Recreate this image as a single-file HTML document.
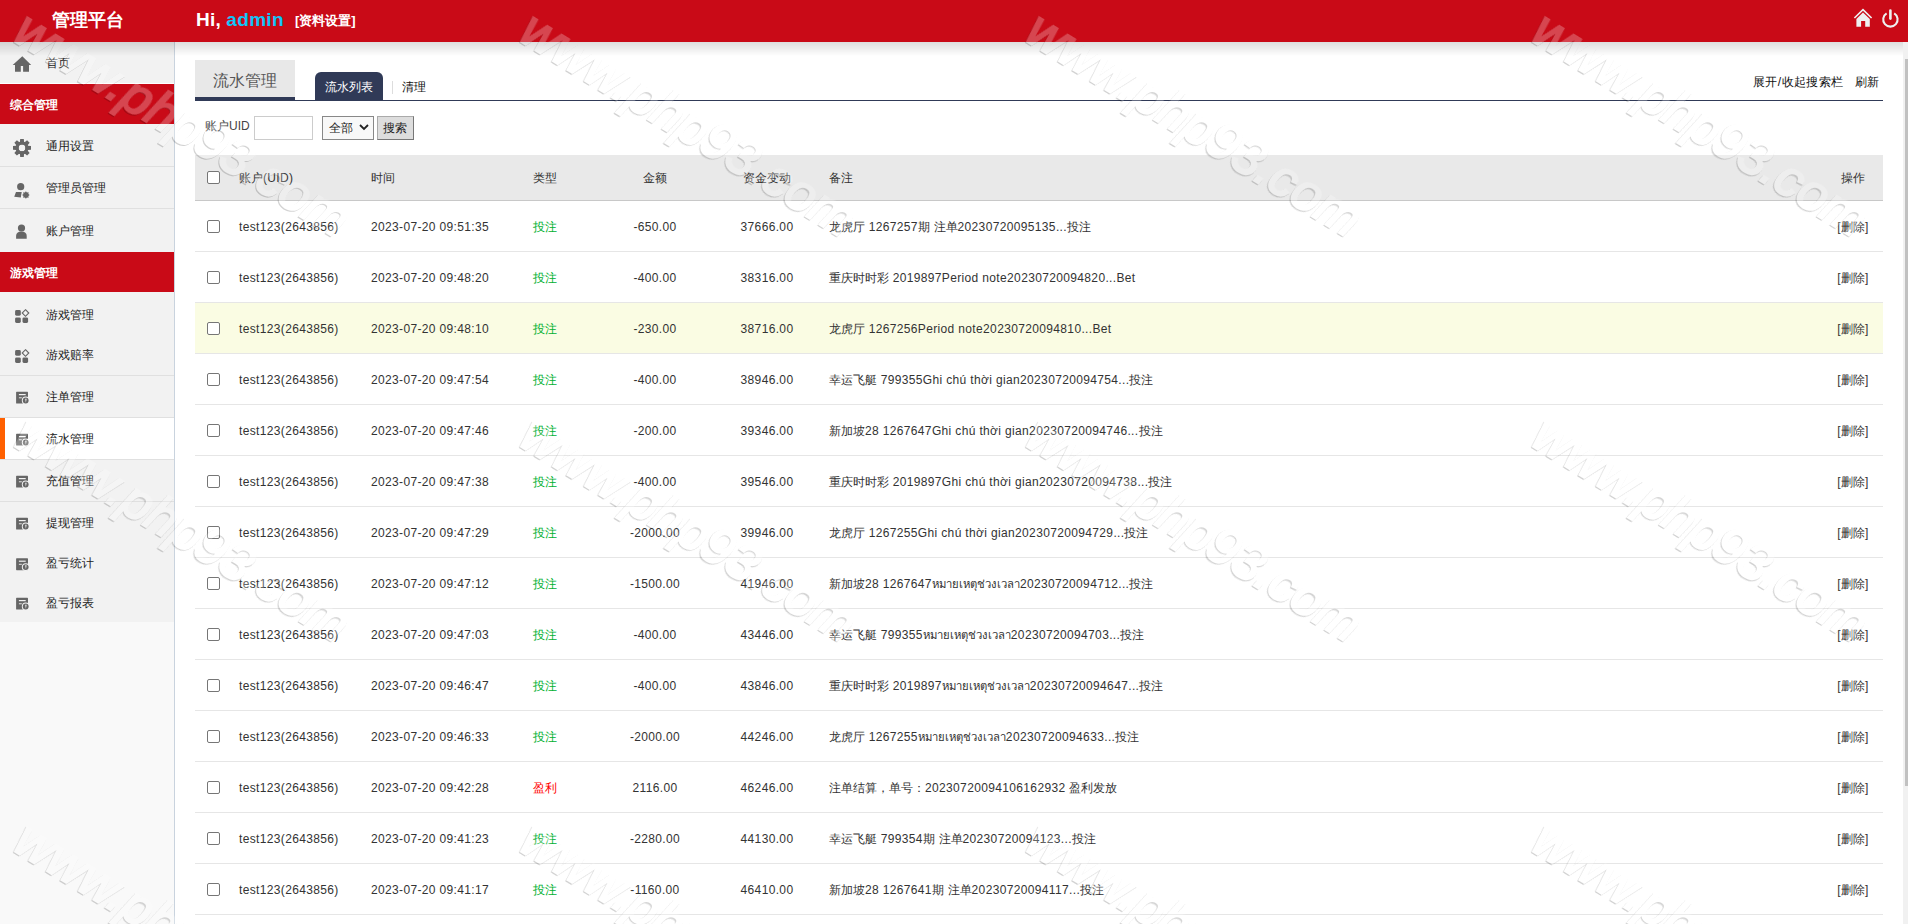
<!DOCTYPE html><html><head><meta charset="utf-8"><style>
*{box-sizing:border-box;margin:0;padding:0}
html,body{width:1908px;height:924px;overflow:hidden;background:#fff;font-family:"Liberation Sans",sans-serif;font-size:12px;color:#333}
.a{position:absolute;white-space:nowrap}
.ic{position:absolute}
#hdr{position:absolute;left:0;top:0;width:1908px;height:42px;background:#c90a17}
#shadow{position:absolute;left:0;top:42px;width:1903px;height:14px;background:linear-gradient(rgba(0,0,0,0.13),rgba(0,0,0,0));z-index:5}
#side{position:absolute;left:0;top:42px;width:175px;height:882px;background:#f9f9f9;border-right:1px solid #c9d3de}
.it{position:absolute;left:0;width:174px;background:#f2f2f2}
.it span{position:absolute;left:46px;top:50%;transform:translateY(-50%);font-size:12px;color:#222}
.rh{position:absolute;left:0;width:174px;height:40px;background:#c90a17;color:#fff;font-weight:bold}
.rh span{position:absolute;left:10px;top:13px;font-size:12px}
.bd{position:absolute;left:0;width:174px;height:1px;background:#e0e0e0}
.cb{position:absolute;width:13px;height:13px;border:1px solid #767676;border-radius:2px;background:#fff}
.tr{position:absolute;left:195px;width:1688px;height:51px;border-bottom:1px solid #e6e6e6}
.wm{position:absolute;white-space:nowrap;font-size:52px;font-style:italic;color:rgba(255,255,255,0.25);text-shadow:-1px 1px 1px rgba(0,0,0,0.18);transform-origin:0 0;transform:rotate(31.5deg);line-height:1}
.c{position:absolute;top:18px;white-space:nowrap;font-size:12px;color:#333;line-height:14px}
</style></head><body>

<div id="hdr">
<div class="a" style="left:52px;top:9px;font-size:18px;font-weight:bold;color:#fff;line-height:22px">管理平台</div>
<div class="a" style="left:196px;top:9px;font-size:19px;font-weight:bold;color:#fff;line-height:22px;letter-spacing:0.2px">Hi, <span style="color:#10c4f8;letter-spacing:0.3px">admin</span></div>
<div class="a" style="left:295px;top:13px;font-size:13px;font-weight:bold;color:#fff;line-height:16px">[资料设置]</div>
<svg class="ic" style="left:1840px;top:0" width="68" height="42" viewBox="1840 0 68 42"><path d="M1854.4 18 L1863 9.6 L1871.6 18" fill="none" stroke="#eef0f0" stroke-width="1.6"/><path d="M1863 12.6 L1869.8 19 L1869.8 26.8 L1865.2 26.8 L1865.2 20.9 L1861.1 20.9 L1861.1 26.8 L1856.4 26.8 L1856.4 19 Z" fill="#eef0f0"/><path d="M1886.6 13.3 A7.2 7.2 0 1 0 1894.2 13.3" fill="none" stroke="#eef0f0" stroke-width="2.1"/><line x1="1890.4" y1="10.6" x2="1890.4" y2="18.6" stroke="#eef0f0" stroke-width="2.6" stroke-linecap="round"/></svg>
</div>
<div id="shadow"></div>
<div id="side"></div>
<div class="it" style="top:42px;height:41px;background:#f2f2f2"><span style="top:20.5px">首页</span></div>
<div class="it" style="top:124px;height:43px;background:#f2f2f2"><span style="top:21.5px">通用设置</span></div>
<div class="it" style="top:167px;height:42px;background:#f2f2f2"><span style="top:21.0px">管理员管理</span></div>
<div class="it" style="top:209px;height:43px;background:#f2f2f2"><span style="top:21.5px">账户管理</span></div>
<div class="it" style="top:292px;height:42px;background:#f2f2f2"><span style="top:22.5px">游戏管理</span></div>
<div class="it" style="top:334px;height:41px;background:#f2f2f2"><span style="top:20.5px">游戏赔率</span></div>
<div class="it" style="top:376px;height:41px;background:#f2f2f2"><span style="top:20.5px">注单管理</span></div>
<div class="it" style="top:418px;height:41px;background:#fff"><span style="top:20.5px">流水管理</span></div><div class="a" style="left:0;top:418px;width:5px;height:41px;background:#ff6000"></div>
<div class="it" style="top:460px;height:41px;background:#f2f2f2"><span style="top:20.5px">充值管理</span></div>
<div class="it" style="top:502px;height:41px;background:#f2f2f2"><span style="top:20.5px">提现管理</span></div>
<div class="it" style="top:543px;height:40px;background:#f2f2f2"><span style="top:20.0px">盈亏统计</span></div>
<div class="it" style="top:583px;height:39px;background:#f2f2f2"><span style="top:19.5px">盈亏报表</span></div>
<svg class="ic" style="left:0;top:0;z-index:3" width="40" height="640" viewBox="0 0 40 640"><path d="M22.3 56.2 L31.2 64.9 L29 64.9 L29 71.8 L23.1 71.8 L23.1 65.9 L20.8 65.9 L20.8 71.8 L15 71.8 L15 64.9 L12.7 64.9 Z" fill="#666"/><path fill-rule="evenodd" d="M27.80,145.80 L31.00,146.10 L31.00,149.70 L27.80,150.00 L27.59,150.52 L29.64,152.99 L27.09,155.54 L24.62,153.49 L24.10,153.70 L23.80,156.90 L20.20,156.90 L19.90,153.70 L19.38,153.49 L16.91,155.54 L14.36,152.99 L16.41,150.52 L16.20,150.00 L13.00,149.70 L13.00,146.10 L16.20,145.80 L16.41,145.28 L14.36,142.81 L16.91,140.26 L19.38,142.31 L19.90,142.10 L20.20,138.90 L23.80,138.90 L24.10,142.10 L24.62,142.31 L27.09,140.26 L29.64,142.81 L27.59,145.28 Z M22 144.5 A3.4 3.4 0 1 0 22 151.3 A3.4 3.4 0 1 0 22 144.5 Z" fill="#666"/><circle cx="22" cy="147.9" r="4.9" fill="none" stroke="#666" stroke-width="3"/><circle cx="20.7" cy="186.7" r="3.6" fill="#666"/><path d="M16 192 L21.7 192 L20.8 197.6 L14.2 196.8 Z" fill="#666"/><path d="M29.70,195.00 L28.39,196.03 L28.59,197.69 L26.93,197.49 L25.90,198.80 L24.87,197.49 L23.21,197.69 L23.41,196.03 L22.10,195.00 L23.41,193.97 L23.21,192.31 L24.87,192.51 L25.90,191.20 L26.93,192.51 L28.59,192.31 L28.39,193.97 Z" fill="#666"/><circle cx="21.5" cy="228" r="3.6" fill="#666"/><path d="M16.1 238.8 L16.1 236 Q16.1 231.4 21.4 231.4 Q26.7 231.4 26.7 236 L26.7 238.8 Z" fill="#666"/><rect x="15.1" y="310" width="5.7" height="5.7" rx="1.4" fill="#666"/><rect x="15.1" y="317.4" width="5.7" height="5.6" rx="1.4" fill="#666"/><rect x="22.5" y="317.4" width="5.6" height="5.6" rx="1.4" fill="#666"/><path d="M25.5 309.7 L28.8 313 L25.5 316.3 L22.2 313 Z" fill="none" stroke="#666" stroke-width="1.1"/><rect x="15.1" y="350" width="5.7" height="5.7" rx="1.4" fill="#666"/><rect x="15.1" y="357.4" width="5.7" height="5.6" rx="1.4" fill="#666"/><rect x="22.5" y="357.4" width="5.6" height="5.6" rx="1.4" fill="#666"/><path d="M25.5 349.7 L28.8 353 L25.5 356.3 L22.2 353 Z" fill="none" stroke="#666" stroke-width="1.1"/><rect x="16.1" y="391.7" width="11.9" height="11.9" rx="0.6" fill="#666"/><rect x="18.9" y="394.0" width="6.8" height="1.2" fill="#f2f2f2"/><rect x="18.9" y="397.2" width="2.9" height="1.1" fill="#f2f2f2" opacity="0.8"/><circle cx="25.7" cy="400.5" r="3.9" fill="#f2f2f2"/><circle cx="25.7" cy="400.5" r="2.9" fill="#666"/><path d="M25.2 398.7 L26.6 398.7 L25.9 402.7 Z" fill="#f2f2f2"/><rect x="16.1" y="433.7" width="11.9" height="11.9" rx="0.6" fill="#666"/><rect x="18.9" y="436.0" width="6.8" height="1.2" fill="#fff"/><rect x="18.9" y="439.2" width="2.9" height="1.1" fill="#fff" opacity="0.8"/><circle cx="25.7" cy="442.5" r="3.9" fill="#fff"/><circle cx="25.7" cy="442.5" r="2.9" fill="#666"/><path d="M25.2 440.7 L26.6 440.7 L25.9 444.7 Z" fill="#fff"/><rect x="16.1" y="475.7" width="11.9" height="11.9" rx="0.6" fill="#666"/><rect x="18.9" y="478.0" width="6.8" height="1.2" fill="#f2f2f2"/><rect x="18.9" y="481.2" width="2.9" height="1.1" fill="#f2f2f2" opacity="0.8"/><circle cx="25.7" cy="484.5" r="3.9" fill="#f2f2f2"/><circle cx="25.7" cy="484.5" r="2.9" fill="#666"/><path d="M25.2 482.7 L26.6 482.7 L25.9 486.7 Z" fill="#f2f2f2"/><rect x="16.1" y="517.7" width="11.9" height="11.9" rx="0.6" fill="#666"/><rect x="18.9" y="520.0" width="6.8" height="1.2" fill="#f2f2f2"/><rect x="18.9" y="523.2" width="2.9" height="1.1" fill="#f2f2f2" opacity="0.8"/><circle cx="25.7" cy="526.5" r="3.9" fill="#f2f2f2"/><circle cx="25.7" cy="526.5" r="2.9" fill="#666"/><path d="M25.2 524.7 L26.6 524.7 L25.9 528.7 Z" fill="#f2f2f2"/><rect x="16.1" y="558.3000000000001" width="11.9" height="11.9" rx="0.6" fill="#666"/><rect x="18.9" y="560.6" width="6.8" height="1.2" fill="#f2f2f2"/><rect x="18.9" y="563.8000000000001" width="2.9" height="1.1" fill="#f2f2f2" opacity="0.8"/><circle cx="25.7" cy="567.1" r="3.9" fill="#f2f2f2"/><circle cx="25.7" cy="567.1" r="2.9" fill="#666"/><path d="M25.2 565.3000000000001 L26.6 565.3000000000001 L25.9 569.3000000000001 Z" fill="#f2f2f2"/><rect x="16.1" y="597.7" width="11.9" height="11.9" rx="0.6" fill="#666"/><rect x="18.9" y="600.0" width="6.8" height="1.2" fill="#f2f2f2"/><rect x="18.9" y="603.2" width="2.9" height="1.1" fill="#f2f2f2" opacity="0.8"/><circle cx="25.7" cy="606.5" r="3.9" fill="#f2f2f2"/><circle cx="25.7" cy="606.5" r="2.9" fill="#666"/><path d="M25.2 604.7 L26.6 604.7 L25.9 608.7 Z" fill="#f2f2f2"/></svg>
<div class="bd" style="top:83px;background:#fff"></div>
<div class="rh" style="top:84px"><span>综合管理</span></div>
<div class="rh" style="top:252px"><span>游戏管理</span></div>
<div class="bd" style="top:166px"></div>
<div class="bd" style="top:208px"></div>
<div class="bd" style="top:375px"></div>
<div class="bd" style="top:417px"></div>
<div class="bd" style="top:459px"></div>
<div class="bd" style="top:501px"></div>
<div class="a" style="left:195px;top:60px;width:100px;height:37px;background:#e8e8e8"></div>
<div class="a" style="left:213px;top:71px;font-size:16px;color:#555;line-height:20px">流水管理</div>
<div class="a" style="left:195px;top:97px;width:100px;height:4px;background:#303a57"></div>
<div class="a" style="left:195px;top:100px;width:1688px;height:1px;background:#303a57"></div>
<div class="a" style="left:315px;top:72px;width:68px;height:28px;background:#303a57;border-radius:6px 6px 0 0"></div>
<div class="a" style="left:325px;top:79px;font-size:12px;color:#fff;line-height:16px">流水列表</div>
<div class="a" style="left:392px;top:81px;width:1px;height:13px;background:#ddd"></div>
<div class="a" style="left:402px;top:79px;font-size:12px;color:#111;line-height:16px">清理</div>
<div class="a" style="left:1753px;top:75px;font-size:12px;color:#111;line-height:14px;letter-spacing:0.4px">展开/收起搜索栏</div>
<div class="a" style="left:1855px;top:75px;font-size:12px;color:#111;line-height:14px">刷新</div>
<div class="a" style="left:205px;top:119px;font-size:12px;color:#444;line-height:14px">账户UID</div>
<div class="a" style="left:254px;top:116px;width:59px;height:24px;border:1px solid #ccc;background:#fff"></div>
<div class="a" style="left:322px;top:116px;width:52px;height:24px;border:1px solid #888;background:#f8f8f8"></div>
<div class="a" style="left:329px;top:121px;font-size:12px;color:#222;line-height:14px">全部</div>
<svg class="ic" style="left:359px;top:124px" width="10" height="7" viewBox="0 0 10 7"><path d="M1 1 L5 5 L9 1" fill="none" stroke="#222" stroke-width="1.8"/></svg>
<div class="a" style="left:377px;top:116px;width:37px;height:24px;background:#ddd;border:1px solid #aaa;border-right-color:#777;border-bottom-color:#777"></div>
<div class="a" style="left:383px;top:121px;font-size:12px;color:#222;line-height:14px">搜索</div>
<div class="a" style="left:195px;top:155px;width:1688px;height:46px;background:#e9e9e9;border-bottom:1px solid #c8c8c8"></div>
<div class="cb" style="left:207px;top:171px"></div>
<div class="c" style="left:239px;top:171px;color:#333">账户<span style="letter-spacing:0.35px">(UID)</span></div>
<div class="c" style="left:371px;top:171px;color:#333">时间</div>
<div class="c" style="left:533px;top:171px;color:#333">类型</div>
<div class="c" style="left:555px;width:200px;text-align:center;top:171px;color:#333">金额</div>
<div class="c" style="left:667px;width:200px;text-align:center;top:171px;color:#333">资金变动</div>
<div class="c" style="left:829px;top:171px;color:#333">备注</div>
<div class="c" style="left:1753px;width:200px;text-align:center;top:171px;color:#333">操作</div>
<div class="tr" style="top:201px;background:#fff"></div>
<div class="cb" style="left:207px;top:220px"></div>
<div class="c" style="left:239px;top:220px;color:#333"><span style="letter-spacing:0.35px">test123(2643856)</span></div>
<div class="c" style="left:371px;top:220px;color:#333"><span style="letter-spacing:0.35px">2023-07-20 09:51:35</span></div>
<div class="c" style="left:533px;top:220px;color:#00b030">投注</div>
<div class="c" style="left:555px;width:200px;text-align:center;top:220px;color:#333"><span style="letter-spacing:0.35px">-650.00</span></div>
<div class="c" style="left:667px;width:200px;text-align:center;top:220px;color:#333"><span style="letter-spacing:0.35px">37666.00</span></div>
<div class="c" style="left:829px;top:220px;color:#333">龙虎厅<span style="letter-spacing:0.35px"> 1267257</span>期<span style="letter-spacing:0.35px"> </span>注单<span style="letter-spacing:0.35px">20230720095135...</span>投注</div>
<div class="c" style="left:1753px;width:200px;text-align:center;top:220px;color:#333"><span style="letter-spacing:0.35px">[</span>删除<span style="letter-spacing:0.35px">]</span></div>
<div class="tr" style="top:252px;background:#fff"></div>
<div class="cb" style="left:207px;top:271px"></div>
<div class="c" style="left:239px;top:271px;color:#333"><span style="letter-spacing:0.35px">test123(2643856)</span></div>
<div class="c" style="left:371px;top:271px;color:#333"><span style="letter-spacing:0.35px">2023-07-20 09:48:20</span></div>
<div class="c" style="left:533px;top:271px;color:#00b030">投注</div>
<div class="c" style="left:555px;width:200px;text-align:center;top:271px;color:#333"><span style="letter-spacing:0.35px">-400.00</span></div>
<div class="c" style="left:667px;width:200px;text-align:center;top:271px;color:#333"><span style="letter-spacing:0.35px">38316.00</span></div>
<div class="c" style="left:829px;top:271px;color:#333">重庆时时彩<span style="letter-spacing:0.35px"> 2019897Period note20230720094820...Bet</span></div>
<div class="c" style="left:1753px;width:200px;text-align:center;top:271px;color:#333"><span style="letter-spacing:0.35px">[</span>删除<span style="letter-spacing:0.35px">]</span></div>
<div class="tr" style="top:303px;background:#fafce3"></div>
<div class="cb" style="left:207px;top:322px"></div>
<div class="c" style="left:239px;top:322px;color:#333"><span style="letter-spacing:0.35px">test123(2643856)</span></div>
<div class="c" style="left:371px;top:322px;color:#333"><span style="letter-spacing:0.35px">2023-07-20 09:48:10</span></div>
<div class="c" style="left:533px;top:322px;color:#00b030">投注</div>
<div class="c" style="left:555px;width:200px;text-align:center;top:322px;color:#333"><span style="letter-spacing:0.35px">-230.00</span></div>
<div class="c" style="left:667px;width:200px;text-align:center;top:322px;color:#333"><span style="letter-spacing:0.35px">38716.00</span></div>
<div class="c" style="left:829px;top:322px;color:#333">龙虎厅<span style="letter-spacing:0.35px"> 1267256Period note20230720094810...Bet</span></div>
<div class="c" style="left:1753px;width:200px;text-align:center;top:322px;color:#333"><span style="letter-spacing:0.35px">[</span>删除<span style="letter-spacing:0.35px">]</span></div>
<div class="tr" style="top:354px;background:#fff"></div>
<div class="cb" style="left:207px;top:373px"></div>
<div class="c" style="left:239px;top:373px;color:#333"><span style="letter-spacing:0.35px">test123(2643856)</span></div>
<div class="c" style="left:371px;top:373px;color:#333"><span style="letter-spacing:0.35px">2023-07-20 09:47:54</span></div>
<div class="c" style="left:533px;top:373px;color:#00b030">投注</div>
<div class="c" style="left:555px;width:200px;text-align:center;top:373px;color:#333"><span style="letter-spacing:0.35px">-400.00</span></div>
<div class="c" style="left:667px;width:200px;text-align:center;top:373px;color:#333"><span style="letter-spacing:0.35px">38946.00</span></div>
<div class="c" style="left:829px;top:373px;color:#333">幸运飞艇<span style="letter-spacing:0.35px"> 799355Ghi chú thời gian20230720094754...</span>投注</div>
<div class="c" style="left:1753px;width:200px;text-align:center;top:373px;color:#333"><span style="letter-spacing:0.35px">[</span>删除<span style="letter-spacing:0.35px">]</span></div>
<div class="tr" style="top:405px;background:#fff"></div>
<div class="cb" style="left:207px;top:424px"></div>
<div class="c" style="left:239px;top:424px;color:#333"><span style="letter-spacing:0.35px">test123(2643856)</span></div>
<div class="c" style="left:371px;top:424px;color:#333"><span style="letter-spacing:0.35px">2023-07-20 09:47:46</span></div>
<div class="c" style="left:533px;top:424px;color:#00b030">投注</div>
<div class="c" style="left:555px;width:200px;text-align:center;top:424px;color:#333"><span style="letter-spacing:0.35px">-200.00</span></div>
<div class="c" style="left:667px;width:200px;text-align:center;top:424px;color:#333"><span style="letter-spacing:0.35px">39346.00</span></div>
<div class="c" style="left:829px;top:424px;color:#333">新加坡<span style="letter-spacing:0.35px">28 1267647Ghi chú thời gian20230720094746...</span>投注</div>
<div class="c" style="left:1753px;width:200px;text-align:center;top:424px;color:#333"><span style="letter-spacing:0.35px">[</span>删除<span style="letter-spacing:0.35px">]</span></div>
<div class="tr" style="top:456px;background:#fff"></div>
<div class="cb" style="left:207px;top:475px"></div>
<div class="c" style="left:239px;top:475px;color:#333"><span style="letter-spacing:0.35px">test123(2643856)</span></div>
<div class="c" style="left:371px;top:475px;color:#333"><span style="letter-spacing:0.35px">2023-07-20 09:47:38</span></div>
<div class="c" style="left:533px;top:475px;color:#00b030">投注</div>
<div class="c" style="left:555px;width:200px;text-align:center;top:475px;color:#333"><span style="letter-spacing:0.35px">-400.00</span></div>
<div class="c" style="left:667px;width:200px;text-align:center;top:475px;color:#333"><span style="letter-spacing:0.35px">39546.00</span></div>
<div class="c" style="left:829px;top:475px;color:#333">重庆时时彩<span style="letter-spacing:0.35px"> 2019897Ghi chú thời gian20230720094738...</span>投注</div>
<div class="c" style="left:1753px;width:200px;text-align:center;top:475px;color:#333"><span style="letter-spacing:0.35px">[</span>删除<span style="letter-spacing:0.35px">]</span></div>
<div class="tr" style="top:507px;background:#fff"></div>
<div class="cb" style="left:207px;top:526px"></div>
<div class="c" style="left:239px;top:526px;color:#333"><span style="letter-spacing:0.35px">test123(2643856)</span></div>
<div class="c" style="left:371px;top:526px;color:#333"><span style="letter-spacing:0.35px">2023-07-20 09:47:29</span></div>
<div class="c" style="left:533px;top:526px;color:#00b030">投注</div>
<div class="c" style="left:555px;width:200px;text-align:center;top:526px;color:#333"><span style="letter-spacing:0.35px">-2000.00</span></div>
<div class="c" style="left:667px;width:200px;text-align:center;top:526px;color:#333"><span style="letter-spacing:0.35px">39946.00</span></div>
<div class="c" style="left:829px;top:526px;color:#333">龙虎厅<span style="letter-spacing:0.35px"> 1267255Ghi chú thời gian20230720094729...</span>投注</div>
<div class="c" style="left:1753px;width:200px;text-align:center;top:526px;color:#333"><span style="letter-spacing:0.35px">[</span>删除<span style="letter-spacing:0.35px">]</span></div>
<div class="tr" style="top:558px;background:#fff"></div>
<div class="cb" style="left:207px;top:577px"></div>
<div class="c" style="left:239px;top:577px;color:#333"><span style="letter-spacing:0.35px">test123(2643856)</span></div>
<div class="c" style="left:371px;top:577px;color:#333"><span style="letter-spacing:0.35px">2023-07-20 09:47:12</span></div>
<div class="c" style="left:533px;top:577px;color:#00b030">投注</div>
<div class="c" style="left:555px;width:200px;text-align:center;top:577px;color:#333"><span style="letter-spacing:0.35px">-1500.00</span></div>
<div class="c" style="left:667px;width:200px;text-align:center;top:577px;color:#333"><span style="letter-spacing:0.35px">41946.00</span></div>
<div class="c" style="left:829px;top:577px;color:#333">新加坡<span style="letter-spacing:0.35px">28 1267647</span><span style="font-size:11.3px">หมายเหตุช่วงเวลา</span><span style="letter-spacing:0.35px">20230720094712...</span>投注</div>
<div class="c" style="left:1753px;width:200px;text-align:center;top:577px;color:#333"><span style="letter-spacing:0.35px">[</span>删除<span style="letter-spacing:0.35px">]</span></div>
<div class="tr" style="top:609px;background:#fff"></div>
<div class="cb" style="left:207px;top:628px"></div>
<div class="c" style="left:239px;top:628px;color:#333"><span style="letter-spacing:0.35px">test123(2643856)</span></div>
<div class="c" style="left:371px;top:628px;color:#333"><span style="letter-spacing:0.35px">2023-07-20 09:47:03</span></div>
<div class="c" style="left:533px;top:628px;color:#00b030">投注</div>
<div class="c" style="left:555px;width:200px;text-align:center;top:628px;color:#333"><span style="letter-spacing:0.35px">-400.00</span></div>
<div class="c" style="left:667px;width:200px;text-align:center;top:628px;color:#333"><span style="letter-spacing:0.35px">43446.00</span></div>
<div class="c" style="left:829px;top:628px;color:#333">幸运飞艇<span style="letter-spacing:0.35px"> 799355</span><span style="font-size:11.3px">หมายเหตุช่วงเวลา</span><span style="letter-spacing:0.35px">20230720094703...</span>投注</div>
<div class="c" style="left:1753px;width:200px;text-align:center;top:628px;color:#333"><span style="letter-spacing:0.35px">[</span>删除<span style="letter-spacing:0.35px">]</span></div>
<div class="tr" style="top:660px;background:#fff"></div>
<div class="cb" style="left:207px;top:679px"></div>
<div class="c" style="left:239px;top:679px;color:#333"><span style="letter-spacing:0.35px">test123(2643856)</span></div>
<div class="c" style="left:371px;top:679px;color:#333"><span style="letter-spacing:0.35px">2023-07-20 09:46:47</span></div>
<div class="c" style="left:533px;top:679px;color:#00b030">投注</div>
<div class="c" style="left:555px;width:200px;text-align:center;top:679px;color:#333"><span style="letter-spacing:0.35px">-400.00</span></div>
<div class="c" style="left:667px;width:200px;text-align:center;top:679px;color:#333"><span style="letter-spacing:0.35px">43846.00</span></div>
<div class="c" style="left:829px;top:679px;color:#333">重庆时时彩<span style="letter-spacing:0.35px"> 2019897</span><span style="font-size:11.3px">หมายเหตุช่วงเวลา</span><span style="letter-spacing:0.35px">20230720094647...</span>投注</div>
<div class="c" style="left:1753px;width:200px;text-align:center;top:679px;color:#333"><span style="letter-spacing:0.35px">[</span>删除<span style="letter-spacing:0.35px">]</span></div>
<div class="tr" style="top:711px;background:#fff"></div>
<div class="cb" style="left:207px;top:730px"></div>
<div class="c" style="left:239px;top:730px;color:#333"><span style="letter-spacing:0.35px">test123(2643856)</span></div>
<div class="c" style="left:371px;top:730px;color:#333"><span style="letter-spacing:0.35px">2023-07-20 09:46:33</span></div>
<div class="c" style="left:533px;top:730px;color:#00b030">投注</div>
<div class="c" style="left:555px;width:200px;text-align:center;top:730px;color:#333"><span style="letter-spacing:0.35px">-2000.00</span></div>
<div class="c" style="left:667px;width:200px;text-align:center;top:730px;color:#333"><span style="letter-spacing:0.35px">44246.00</span></div>
<div class="c" style="left:829px;top:730px;color:#333">龙虎厅<span style="letter-spacing:0.35px"> 1267255</span><span style="font-size:11.3px">หมายเหตุช่วงเวลา</span><span style="letter-spacing:0.35px">20230720094633...</span>投注</div>
<div class="c" style="left:1753px;width:200px;text-align:center;top:730px;color:#333"><span style="letter-spacing:0.35px">[</span>删除<span style="letter-spacing:0.35px">]</span></div>
<div class="tr" style="top:762px;background:#fff"></div>
<div class="cb" style="left:207px;top:781px"></div>
<div class="c" style="left:239px;top:781px;color:#333"><span style="letter-spacing:0.35px">test123(2643856)</span></div>
<div class="c" style="left:371px;top:781px;color:#333"><span style="letter-spacing:0.35px">2023-07-20 09:42:28</span></div>
<div class="c" style="left:533px;top:781px;color:#ff0000">盈利</div>
<div class="c" style="left:555px;width:200px;text-align:center;top:781px;color:#333"><span style="letter-spacing:0.35px">2116.00</span></div>
<div class="c" style="left:667px;width:200px;text-align:center;top:781px;color:#333"><span style="letter-spacing:0.35px">46246.00</span></div>
<div class="c" style="left:829px;top:781px;color:#333">注单结算，单号：<span style="letter-spacing:0.35px">20230720094106162932 </span>盈利发放</div>
<div class="c" style="left:1753px;width:200px;text-align:center;top:781px;color:#333"><span style="letter-spacing:0.35px">[</span>删除<span style="letter-spacing:0.35px">]</span></div>
<div class="tr" style="top:813px;background:#fff"></div>
<div class="cb" style="left:207px;top:832px"></div>
<div class="c" style="left:239px;top:832px;color:#333"><span style="letter-spacing:0.35px">test123(2643856)</span></div>
<div class="c" style="left:371px;top:832px;color:#333"><span style="letter-spacing:0.35px">2023-07-20 09:41:23</span></div>
<div class="c" style="left:533px;top:832px;color:#00b030">投注</div>
<div class="c" style="left:555px;width:200px;text-align:center;top:832px;color:#333"><span style="letter-spacing:0.35px">-2280.00</span></div>
<div class="c" style="left:667px;width:200px;text-align:center;top:832px;color:#333"><span style="letter-spacing:0.35px">44130.00</span></div>
<div class="c" style="left:829px;top:832px;color:#333">幸运飞艇<span style="letter-spacing:0.35px"> 799354</span>期<span style="letter-spacing:0.35px"> </span>注单<span style="letter-spacing:0.35px">20230720094123...</span>投注</div>
<div class="c" style="left:1753px;width:200px;text-align:center;top:832px;color:#333"><span style="letter-spacing:0.35px">[</span>删除<span style="letter-spacing:0.35px">]</span></div>
<div class="tr" style="top:864px;background:#fff"></div>
<div class="cb" style="left:207px;top:883px"></div>
<div class="c" style="left:239px;top:883px;color:#333"><span style="letter-spacing:0.35px">test123(2643856)</span></div>
<div class="c" style="left:371px;top:883px;color:#333"><span style="letter-spacing:0.35px">2023-07-20 09:41:17</span></div>
<div class="c" style="left:533px;top:883px;color:#00b030">投注</div>
<div class="c" style="left:555px;width:200px;text-align:center;top:883px;color:#333"><span style="letter-spacing:0.35px">-1160.00</span></div>
<div class="c" style="left:667px;width:200px;text-align:center;top:883px;color:#333"><span style="letter-spacing:0.35px">46410.00</span></div>
<div class="c" style="left:829px;top:883px;color:#333">新加坡<span style="letter-spacing:0.35px">28 1267641</span>期<span style="letter-spacing:0.35px"> </span>注单<span style="letter-spacing:0.35px">20230720094117...</span>投注</div>
<div class="c" style="left:1753px;width:200px;text-align:center;top:883px;color:#333"><span style="letter-spacing:0.35px">[</span>删除<span style="letter-spacing:0.35px">]</span></div>
<div class="tr" style="top:915px;background:#fff"></div>
<div class="cb" style="left:207px;top:934px"></div>
<div class="c" style="left:239px;top:934px;color:#333"><span style="letter-spacing:0.35px">test123(2643856)</span></div>
<div class="c" style="left:371px;top:934px;color:#333"><span style="letter-spacing:0.35px">2023-07-20 09:41:05</span></div>
<div class="c" style="left:533px;top:934px;color:#00b030">投注</div>
<div class="c" style="left:555px;width:200px;text-align:center;top:934px;color:#333"><span style="letter-spacing:0.35px">-400.00</span></div>
<div class="c" style="left:667px;width:200px;text-align:center;top:934px;color:#333"><span style="letter-spacing:0.35px">46810.00</span></div>
<div class="c" style="left:829px;top:934px;color:#333"></div>
<div class="c" style="left:1753px;width:200px;text-align:center;top:934px;color:#333"><span style="letter-spacing:0.35px">[</span>删除<span style="letter-spacing:0.35px">]</span></div>
<div class="a" style="left:1903px;top:42px;width:5px;height:882px;background:#f1f1f1;z-index:6"></div>
<div class="a" style="left:1905px;top:59px;width:3px;height:727px;background:#c1c1c1;z-index:6"></div>
<svg style="position:absolute;left:0;top:0;z-index:4;pointer-events:none" width="1908" height="924" viewBox="0 0 1908 924"><defs><text id="wt" x="0" y="0" font-family="Liberation Sans" font-style="italic" font-size="52">www.php93.com</text><mask id="wm" maskUnits="userSpaceOnUse" x="0" y="0" width="1908" height="924"><rect x="0" y="0" width="1908" height="924" fill="white"/><use href="#wt" fill="black" stroke="black" stroke-width="2.2" transform="translate(11,39) rotate(31.5)"/><use href="#wt" fill="black" stroke="black" stroke-width="2.2" transform="translate(517,39) rotate(31.5)"/><use href="#wt" fill="black" stroke="black" stroke-width="2.2" transform="translate(1023,39) rotate(31.5)"/><use href="#wt" fill="black" stroke="black" stroke-width="2.2" transform="translate(1529,39) rotate(31.5)"/><use href="#wt" fill="black" stroke="black" stroke-width="2.2" transform="translate(11,444) rotate(31.5)"/><use href="#wt" fill="black" stroke="black" stroke-width="2.2" transform="translate(517,444) rotate(31.5)"/><use href="#wt" fill="black" stroke="black" stroke-width="2.2" transform="translate(1023,444) rotate(31.5)"/><use href="#wt" fill="black" stroke="black" stroke-width="2.2" transform="translate(1529,444) rotate(31.5)"/><use href="#wt" fill="black" stroke="black" stroke-width="2.2" transform="translate(11,849) rotate(31.5)"/><use href="#wt" fill="black" stroke="black" stroke-width="2.2" transform="translate(517,849) rotate(31.5)"/><use href="#wt" fill="black" stroke="black" stroke-width="2.2" transform="translate(1023,849) rotate(31.5)"/><use href="#wt" fill="black" stroke="black" stroke-width="2.2" transform="translate(1529,849) rotate(31.5)"/></mask><filter id="wb" x="-10%" y="-10%" width="120%" height="120%"><feGaussianBlur stdDeviation="0.5"/></filter></defs><g mask="url(#wm)"><g filter="url(#wb)" opacity="0.18"><use href="#wt" fill="black" stroke="black" stroke-width="2.2" transform="translate(10,40) rotate(31.5)"/><use href="#wt" fill="black" stroke="black" stroke-width="2.2" transform="translate(516,40) rotate(31.5)"/><use href="#wt" fill="black" stroke="black" stroke-width="2.2" transform="translate(1022,40) rotate(31.5)"/><use href="#wt" fill="black" stroke="black" stroke-width="2.2" transform="translate(1528,40) rotate(31.5)"/><use href="#wt" fill="black" stroke="black" stroke-width="2.2" transform="translate(10,445) rotate(31.5)"/><use href="#wt" fill="black" stroke="black" stroke-width="2.2" transform="translate(516,445) rotate(31.5)"/><use href="#wt" fill="black" stroke="black" stroke-width="2.2" transform="translate(1022,445) rotate(31.5)"/><use href="#wt" fill="black" stroke="black" stroke-width="2.2" transform="translate(1528,445) rotate(31.5)"/><use href="#wt" fill="black" stroke="black" stroke-width="2.2" transform="translate(10,850) rotate(31.5)"/><use href="#wt" fill="black" stroke="black" stroke-width="2.2" transform="translate(516,850) rotate(31.5)"/><use href="#wt" fill="black" stroke="black" stroke-width="2.2" transform="translate(1022,850) rotate(31.5)"/><use href="#wt" fill="black" stroke="black" stroke-width="2.2" transform="translate(1528,850) rotate(31.5)"/></g></g><g opacity="0.25"><use href="#wt" fill="white" stroke="white" stroke-width="2.2" transform="translate(11,39) rotate(31.5)"/><use href="#wt" fill="white" stroke="white" stroke-width="2.2" transform="translate(517,39) rotate(31.5)"/><use href="#wt" fill="white" stroke="white" stroke-width="2.2" transform="translate(1023,39) rotate(31.5)"/><use href="#wt" fill="white" stroke="white" stroke-width="2.2" transform="translate(1529,39) rotate(31.5)"/><use href="#wt" fill="white" stroke="white" stroke-width="2.2" transform="translate(11,444) rotate(31.5)"/><use href="#wt" fill="white" stroke="white" stroke-width="2.2" transform="translate(517,444) rotate(31.5)"/><use href="#wt" fill="white" stroke="white" stroke-width="2.2" transform="translate(1023,444) rotate(31.5)"/><use href="#wt" fill="white" stroke="white" stroke-width="2.2" transform="translate(1529,444) rotate(31.5)"/><use href="#wt" fill="white" stroke="white" stroke-width="2.2" transform="translate(11,849) rotate(31.5)"/><use href="#wt" fill="white" stroke="white" stroke-width="2.2" transform="translate(517,849) rotate(31.5)"/><use href="#wt" fill="white" stroke="white" stroke-width="2.2" transform="translate(1023,849) rotate(31.5)"/><use href="#wt" fill="white" stroke="white" stroke-width="2.2" transform="translate(1529,849) rotate(31.5)"/></g></svg>
</body></html>
